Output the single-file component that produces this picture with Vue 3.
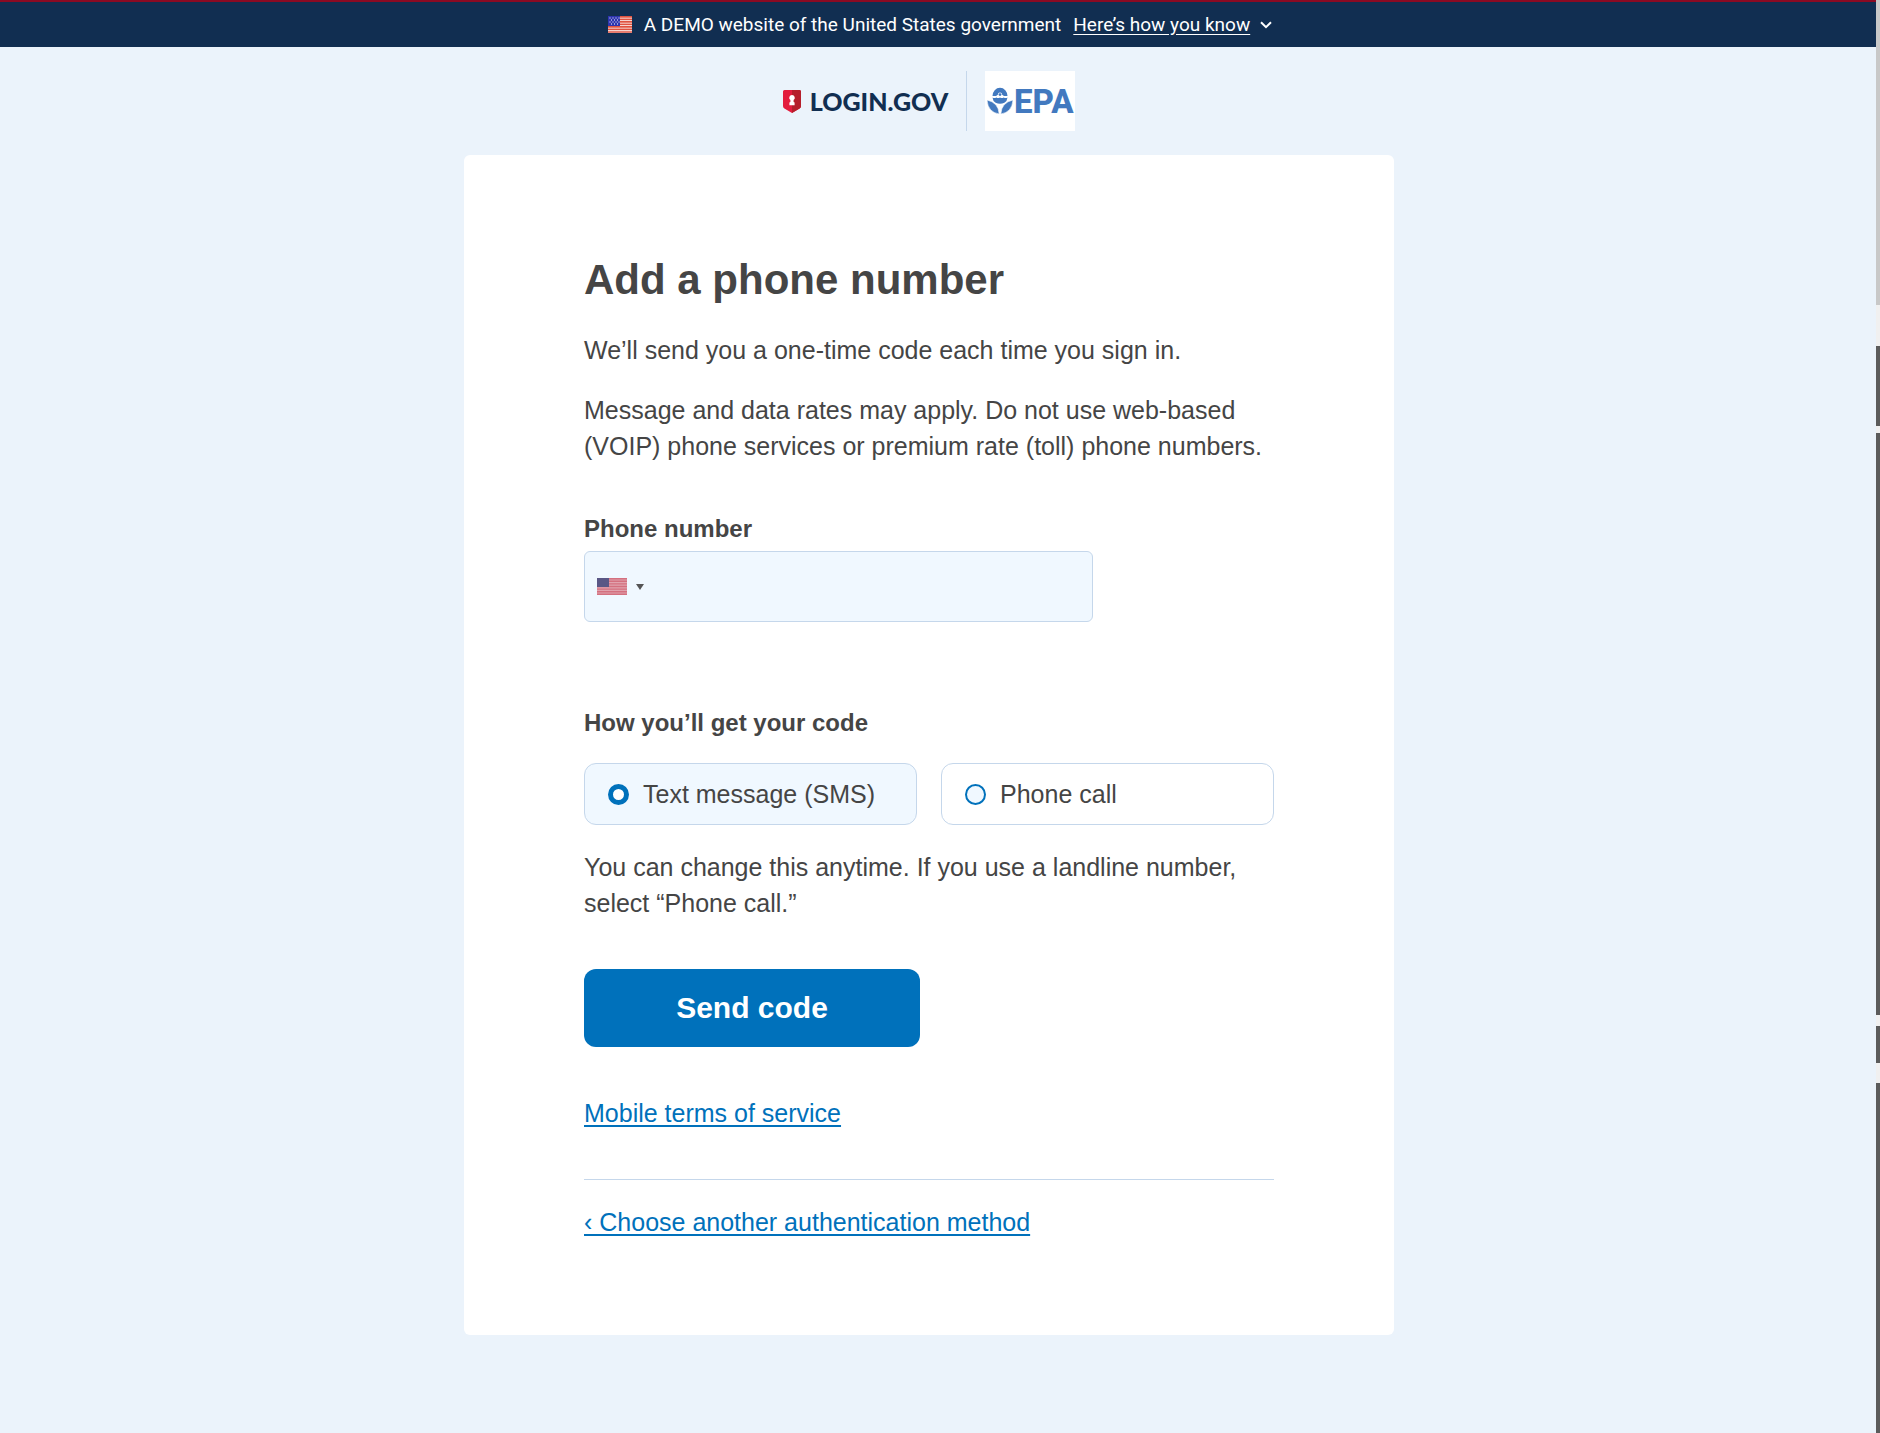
<script setup>
  import { ref } from 'vue'

  const phone = ref('')
  const method = ref('sms')
  const methods = [
    { id: 'sms', label: 'Text message (SMS)' },
    { id: 'voice', label: 'Phone call' }
  ]
  // heights of the blocks in the side rail, light and dark alternate
  const rail = [
    { size: 305, tone: 'mid' },
    { size: 41, tone: 'light' },
    { size: 80, tone: 'dark' },
    { size: 7, tone: 'light' },
    { size: 582, tone: 'dark' },
    { size: 11, tone: 'light' },
    { size: 37, tone: 'dark' },
    { size: 20, tone: 'light' },
    { size: 350, tone: 'dark' }
  ]
</script>

<template>
  <div class="shell">
    <div class="page">
      <div class="banner">
        <svg class="banner_flag" viewBox="0 0 24 17" aria-hidden="true">
          <rect width="24" height="17" fill="#fff" />
          <path d="M0 .9h24M0 3.4h24M0 5.9h24M0 8.4h24M0 10.9h24M0 13.4h24M0 16h24" stroke="#e0523f" stroke-width="1.6" />
          <rect width="12" height="10" fill="#2e35b0" />
          <path d="M1.5 2h10M3 4h8M1.5 6h10M3 8h8" stroke="#fff" stroke-width="1" stroke-dasharray="1 2" />
        </svg>
        <span>A DEMO website of the United States government</span>
        <button type="button" class="banner_toggle">
          <span>Here’s how you know</span>
          <svg class="chevron" viewBox="0 0 12 8" aria-hidden="true">
            <path d="M1 1.2l5 5 5-5" fill="none" stroke="#fff" stroke-width="2" />
          </svg>
        </button>
      </div>

      <div class="content">
        <header class="logos">
          <div class="login">
            <svg class="shield" viewBox="0 0 18 23" aria-hidden="true">
              <path d="M1.500 0h15Q18 0 18 1.500V16q0 1.600-1.400 2.400L9 23l-7.600-4.600Q0 17.600 0 16V1.500Q0 0 1.500 0z" fill="#e31c3d" />
              <path d="M9 0h7.500Q18 0 18 1.500V16q0 1.600-1.400 2.400L9 23z" fill="#b51f2b" />
              <path d="M9 5a2.800 2.800 0 0 1 1.600 5.100V12l1 .4v2.800H6.400v-2.800l1-.4v-1.900A2.800 2.800 0 0 1 9 5z" fill="#fff" />
            </svg>
            <span>LOGIN.GOV</span>
          </div>
          <div class="divider"></div>
          <svg class="epa" viewBox="0 0 90 60" role="img" aria-label="EPA">
            <rect width="90" height="60" fill="#fff" />
            <g fill="#4279bf">
              <path fill-rule="evenodd" d="M7.500 25a7.500 8.300 0 0 1 15 0zM15 21.500a2.200 2.200 0 0 0-2.200 2.200L11 25h8l-1.800-1.300A2.200 2.200 0 0 0 15 21.500z" />
              <circle cx="15" cy="23.600" r="1.400" />
              <path d="M7.500 26.400q1.900 1.400 3.800 0 1.900 1.400 3.700 0 1.900 1.400 3.700 0 1.900 1.400 3.800 0-.3 3.600-3.100 5.300-4.400 2-8.800 0-2.800-1.700-3.100-5.300z" />
              <path d="M2 29q11.500 2.500 12.200 14Q3 41.500 2 29z" stroke="#fff" stroke-width=".6" />
              <path d="M28 29q-11.500 2.500-12.200 14Q27 41.500 28 29z" stroke="#fff" stroke-width=".6" />
              <text class="epa_text" x="29" y="42">EPA</text>
            </g>
          </svg>
        </header>

        <main class="card">
          <h1>Add a phone number</h1>
          <p>We’ll send you a one-time code each time you sign in.</p>
          <p>Message and data rates may apply. Do not use web-based (VOIP) phone services or premium rate (toll) phone numbers.</p>

          <form @submit.prevent>
            <label class="label" for="phone">Phone number</label>
            <div class="phone">
              <button type="button" class="country" aria-label="Country: United States">
                <svg class="country_flag" viewBox="0 0 30 17" aria-hidden="true">
                  <rect width="30" height="17" fill="#e1a3ae" />
                  <path d="M0 .7h30M0 3.300h30M0 5.900h30M0 8.500h30M0 11.100h30M0 13.700h30M0 16.300h30" stroke="#d4707f" stroke-width="1.400" />
                  <rect width="12" height="9" fill="#5a5785" />
                </svg>
                <svg class="caret" viewBox="0 0 8 6" aria-hidden="true">
                  <path d="M0 0h8L4 6z" fill="#555" />
                </svg>
              </button>
              <input id="phone" v-model="phone" type="tel" />
            </div>

            <fieldset>
              <legend>How you’ll get your code</legend>
              <div class="options">
                <label
                  v-for="item in methods"
                  :key="item.id"
                  class="option"
                  :class="[method == item.id ? 'selected' : '']"
                >
                  <input v-model="method" type="radio" name="method" :value="item.id" />
                  <span>{{ item.label }}</span>
                </label>
              </div>
            </fieldset>
            <p class="hint">You can change this anytime. If you use a landline number, select “Phone call.”</p>
            <button type="submit" class="send">Send code</button>
          </form>

          <div class="terms"><a href="#">Mobile terms of service</a></div>
          <div class="back"><a href="#">‹ Choose another authentication method</a></div>
        </main>
      </div>
    </div>

    <div class="rail" aria-hidden="true">
      <div v-for="(item,index) in rail" :key="index" :class="item.tone" :style="{ flexGrow: item.size }"></div>
    </div>
  </div>
</template>

<style>
  body{
    margin: 0;
    background-color: #ebf3fb;
  }
</style>

<style scoped>
  .shell{
    display: flex;
    min-height: 100vh;
    color: #454545;
    font-family: "Liberation Sans", Arial, sans-serif;
    font-size: 25px;
    line-height: 36px;
  }
  .page{
    flex: 1;
    min-width: 0;
  }
  .banner{
    display: flex;
    align-items: center;
    justify-content: center;
    gap: 12px;
    box-sizing: border-box;
    min-height: 47px;
    padding-left: 4px;
    border-top: 2px solid #8b0a23;
    background-color: #112e51;
    color: #fff;
    font-family: Roboto, sans-serif;
    font-size: 19px;
    line-height: 24px;
  }
  .banner_flag{
    width: 24px;
    height: 17px;
  }
  .banner_toggle{
    display: flex;
    align-items: center;
    gap: 10px;
    padding: 0;
    border: 0;
    background: none;
    color: inherit;
    font: inherit;
    cursor: pointer;
  }
  .banner_toggle span{
    text-decoration: underline;
    text-underline-offset: 3px;
  }
  .chevron{
    width: 12px;
    height: 8px;
  }
  .content{
    padding: 24px 18px 72px 0;
  }
  .logos{
    display: flex;
    align-items: center;
    justify-content: center;
    gap: 18px;
  }
  .login{
    display: flex;
    align-items: center;
    gap: 9px;
    color: #112e51;
    font-family: Lato, sans-serif;
    font-size: 25px;
    font-weight: 900;
  }
  .shield{
    width: 18px;
    height: 23px;
  }
  .divider{
    width: 1px;
    height: 60px;
    background-color: #c5d7eb;
  }
  .epa{
    width: 90px;
    height: 60px;
  }
  .epa_text{
    font-family: Roboto, sans-serif;
    font-size: 33px;
    font-weight: 800;
  }
  .card{
    box-sizing: border-box;
    max-width: 930px;
    margin: 24px auto 0;
    padding: 97px 120px 95px;
    border-radius: 6px;
    background-color: #fff;
  }
  h1{
    margin: 0 0 24px;
    font-size: 42px;
    font-weight: 700;
    line-height: 56px;
  }
  p{
    margin: 0 0 24px;
  }
  .label{
    display: block;
    margin-top: 47px;
    font-size: 24px;
    font-weight: 700;
  }
  .phone{
    display: flex;
    box-sizing: border-box;
    max-width: 509px;
    height: 71px;
    margin-top: 4px;
    border: 1px solid #c5d7eb;
    border-radius: 6px;
    background-color: #f0f8ff;
  }
  .country{
    display: flex;
    align-items: center;
    gap: 9px;
    padding: 0 12px;
    border: 0;
    background: none;
  }
  .country_flag{
    width: 30px;
    height: 17px;
  }
  .caret{
    width: 8px;
    height: 6px;
  }
  .phone input{
    flex: 1;
    min-width: 0;
    padding: 0 12px;
    border: 0;
    outline: 0;
    background: none;
    color: inherit;
    font: inherit;
  }
  fieldset{
    min-width: 0;
    margin: 83px 0 0;
    padding: 0;
    border: 0;
  }
  legend{
    padding: 0;
    font-size: 24px;
    font-weight: 700;
  }
  .options{
    display: grid;
    grid-template-columns: 1fr 1fr;
    gap: 24px;
    margin-top: 22px;
  }
  .option{
    display: flex;
    align-items: center;
    gap: 14px;
    padding: 12px 23px;
    border: 1px solid #c5d7eb;
    border-radius: 12px;
  }
  .option.selected{
    background-color: #f0f8ff;
  }
  .option input{
    appearance: none;
    flex: none;
    box-sizing: border-box;
    width: 21px;
    height: 21px;
    margin: 0;
    border: 2px solid #0071bb;
    border-radius: 50%;
    background-color: #f0f8ff;
  }
  .option input:checked{
    border-width: 5px;
    background-color: #fff;
  }
  .hint{
    margin: 24px 0 48px;
  }
  .send{
    width: 336px;
    max-width: 100%;
    height: 78px;
    border: 0;
    border-radius: 12px;
    background-color: #0071bb;
    color: #fff;
    font-family: inherit;
    font-size: 30px;
    font-weight: 700;
    cursor: pointer;
  }
  .terms{
    margin-top: 48px;
    padding-bottom: 48px;
  }
  .back{
    padding-top: 24px;
    border-top: 1px solid #c5d7eb;
  }
  a{
    color: #0071bb;
    text-decoration: underline;
    text-decoration-thickness: 2px;
    text-underline-offset: 3px;
    text-decoration-skip-ink: none;
  }
  .rail{
    display: flex;
    flex-direction: column;
    width: 4px;
  }
  .mid{
    background-color: #c8c8c8;
  }
  .light{
    background-color: #f0f0f0;
  }
  .dark{
    background-color: #5b5b5b;
  }
</style>
